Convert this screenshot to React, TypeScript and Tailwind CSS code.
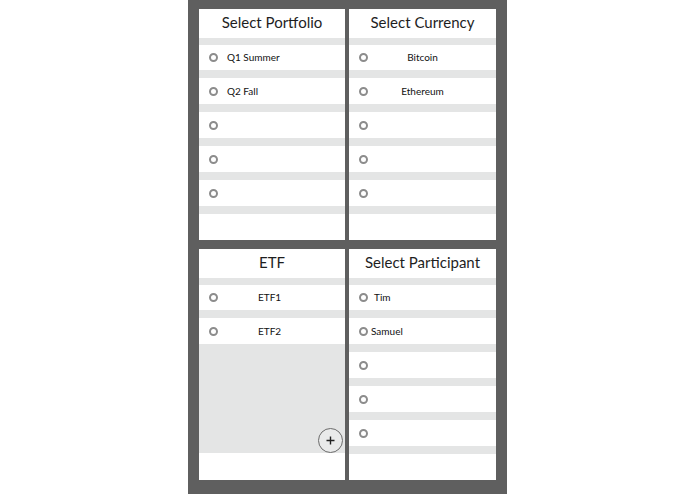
import React from "react";

type Row = { label?: string; align?: "left" | "center" | "offset"; indent?: number };

const font = { fontFamily: "Lato, 'Open Sans', sans-serif" };

function Radio() {
    return <span className="w-[9px] h-[9px] rounded-full border-2 border-[#8c8c8c] shrink-0"></span>;
}

function ListRow({ row, tall }: { row: Row; tall?: boolean }) {
    return (
        <div className={`relative flex items-center pl-[10px] ${tall ? "h-[26px]" : "h-[25px]"}`}>
            <Radio />
            {row.label && row.align === "center" && (
                <span className="absolute inset-0 flex items-center justify-center text-[10px] text-[#111]">{row.label}</span>
            )}
            {row.label && row.align !== "center" && (
                <span className="absolute top-0 bottom-0 flex items-center text-[10px] text-[#111]" style={{ left: row.indent }}>
                    {row.label}
                </span>
            )}
        </div>
    );
}

function Strip({ h = "h-[8px]" }: { h?: string }) {
    return <div className={`${h} bg-[#e4e5e5]`}></div>;
}

function Panel({ title, rows, etf }: { title: string; rows: Row[]; etf?: boolean }) {
    return (
        <div className="bg-white flex flex-col h-[231px]" style={font}>
            <div className="h-[29px] flex items-center justify-center pb-[3px] text-[15px] text-[#1e1e1e]">{title}</div>
            <Strip h="h-[7px]" />
            <ListRow row={rows[0]} />
            <Strip />
            <ListRow row={rows[1]} tall />
            {etf ? (
                <div className="relative h-[109px] bg-[#e4e5e5]">
                    <button className="absolute right-[2px] bottom-0 w-[25px] h-[25px] rounded-full border-[1.5px] border-[#6b6b6b] bg-[#e9eaea] flex items-center justify-center">
                        <svg width="11" height="11" viewBox="0 0 11 11">
                            <path d="M5.5 1.5v8M1.5 5.5h8" stroke="#222" strokeWidth="1.4" />
                        </svg>
                    </button>
                </div>
            ) : (
                <>
                    <Strip />
                    <ListRow row={rows[2] ?? {}} tall />
                    <Strip />
                    <ListRow row={rows[3] ?? {}} tall />
                    <Strip />
                    <ListRow row={rows[4] ?? {}} tall />
                    <Strip />
                </>
            )}
            <div className="flex-1"></div>
        </div>
    );
}

export default function App() {
    return (
        <div className="w-full h-[494px] bg-white flex justify-center">
            <div className="w-[319px] h-[494px] bg-[#5f5f5f] pl-[11px] pr-[11px] pt-[9px] pb-[14px] grid grid-cols-[146px_147px] grid-rows-[231px_231px] gap-x-[4px] gap-y-[9px]">
                <Panel
                    title="Select Portfolio"
                    rows={[
                        { label: "Q1 Summer", indent: 28 },
                        { label: "Q2 Fall", indent: 28 },
                    ]}
                />
                <Panel
                    title="Select Currency"
                    rows={[
                        { label: "Bitcoin", align: "center" },
                        { label: "Ethereum", align: "center" },
                    ]}
                />
                <Panel
                    title="ETF"
                    etf
                    rows={[
                        { label: "ETF1", indent: 59 },
                        { label: "ETF2", indent: 59 },
                    ]}
                />
                <Panel
                    title="Select Participant"
                    rows={[
                        { label: "Tim", indent: 25 },
                        { label: "Samuel", indent: 22 },
                    ]}
                />
            </div>
        </div>
    );
}
